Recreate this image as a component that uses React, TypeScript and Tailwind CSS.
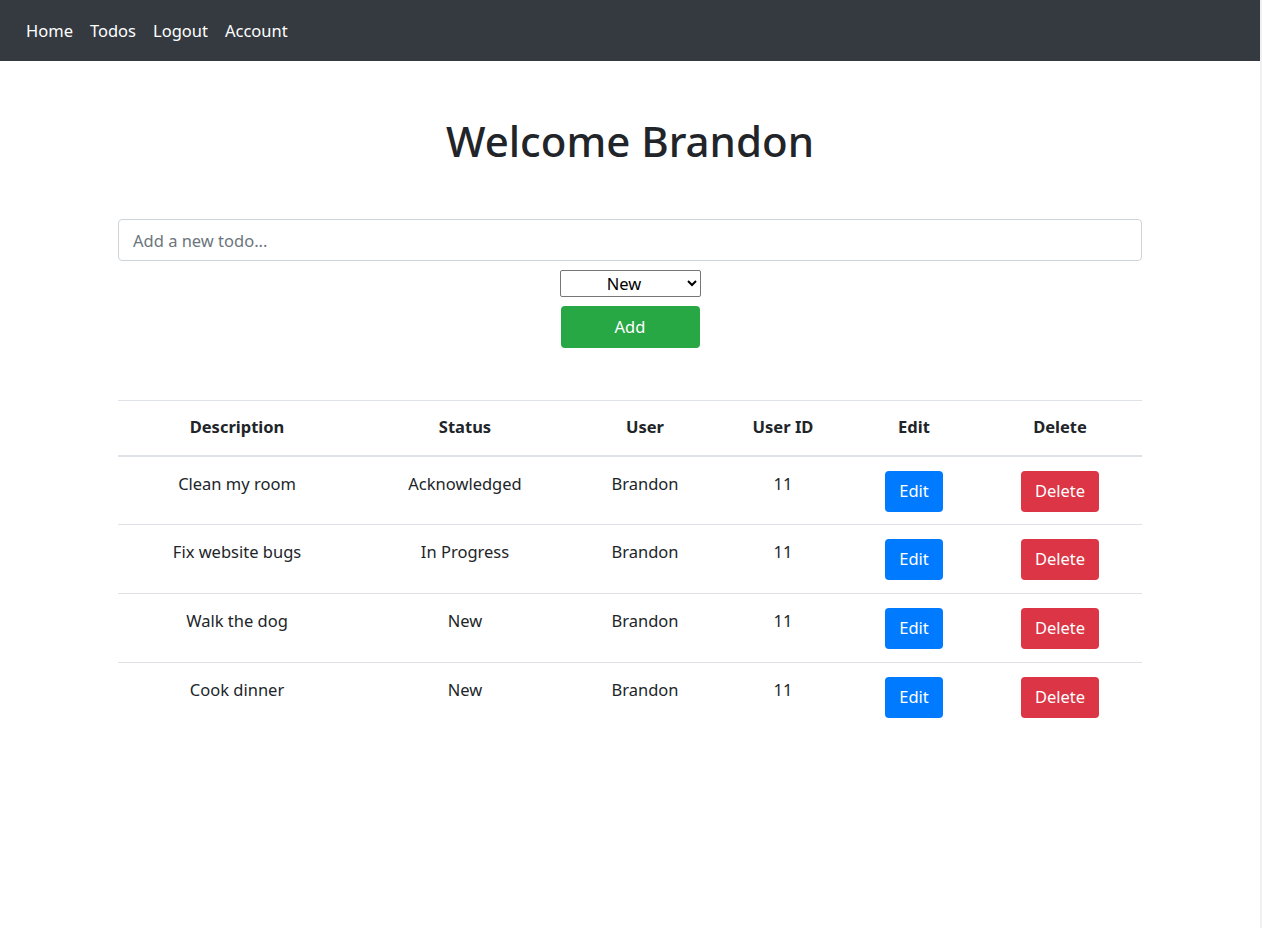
import React, { useState } from 'react'

type Todo = {
  id: number
  description: string
  status: string
  user: string
  userId: number
}

const todos: Todo[] = [
  { id: 1, description: 'Clean my room', status: 'Acknowledged', user: 'Brandon', userId: 11 },
  { id: 2, description: 'Fix website bugs', status: 'In Progress', user: 'Brandon', userId: 11 },
  { id: 3, description: 'Walk the dog', status: 'New', user: 'Brandon', userId: 11 },
  { id: 4, description: 'Cook dinner', status: 'New', user: 'Brandon', userId: 11 },
]

const font = { fontFamily: '"Noto Sans", "Open Sans", sans-serif' }

const NavBar: React.FC = () => (
  <nav className="h-[61px] bg-[#343a40] flex items-center pl-[17.5px]">
    {['Home', 'Todos', 'Logout', 'Account'].map((label) => (
      <a key={label} href="#" className="px-[8.5px] text-[16.5px] text-white leading-[27px]">
        {label}
      </a>
    ))}
  </nav>
)

export default function App() {
  const [status, setStatus] = useState('New')

  return (
    <div className="flex min-h-[928px] bg-white text-[#212529]" style={font}>
      <div className="flex-1 flex flex-col">
        <NavBar />

        <main className="w-[1024px] mx-auto flex flex-col items-center">
          {/* Heading */}
          <h1 className="mt-[51px] h-[58px] text-[42px] leading-[58px] font-medium">Welcome Brandon</h1>

          {/* New todo form */}
          <input
            type="text"
            placeholder="Add a new todo..."
            className="mt-[49px] w-full h-[42px] px-[14px] text-[16.5px] border border-[#ced4da] rounded-[4px] placeholder:text-[#6c757d] outline-none"
          />
          <select
            value={status}
            onChange={(e) => setStatus(e.target.value)}
            className="mt-[9px] w-[141px] h-[27px] text-[16.5px] text-black border border-[#767676] rounded-[2px] bg-white text-center [text-align-last:center]"
          >
            <option>New</option>
            <option>Acknowledged</option>
            <option>In Progress</option>
            <option>Done</option>
          </select>
          <button className="mt-[9px] w-[139px] h-[42px] rounded-[4px] bg-[#28a745] text-white text-[16.5px]">
            Add
          </button>

          {/* Todo table */}
          <table className="mt-[52px] w-full border-collapse text-[16.5px] text-center">
            <thead>
              <tr className="h-[55px] border-t border-[#dee2e6] border-b-2">
                <th className="w-[238px] font-bold">Description</th>
                <th className="w-[218px] font-bold">Status</th>
                <th className="w-[142px] font-bold">User</th>
                <th className="w-[134px] font-bold">User ID</th>
                <th className="w-[128px] font-bold">Edit</th>
                <th className="w-[164px] font-bold">Delete</th>
              </tr>
            </thead>
            <tbody>
              {todos.map((t, i) => (
                <tr
                  key={t.id}
                  className={i < todos.length - 1 ? 'h-[69px] border-b border-[#dee2e6] align-top' : 'h-[69px] align-top'}
                >
                  <td className="pt-[15px]">{t.description}</td>
                  <td className="pt-[15px]">{t.status}</td>
                  <td className="pt-[15px]">{t.user}</td>
                  <td className="pt-[15px]">{t.userId}</td>
                  <td className="pt-[14px]">
                    <button className="h-[41px] w-[58px] rounded-[4px] bg-[#007bff] text-white text-[16.5px]">Edit</button>
                  </td>
                  <td className="pt-[14px]">
                    <button className="h-[41px] w-[78px] rounded-[4px] bg-[#dc3545] text-white text-[16.5px]">Delete</button>
                  </td>
                </tr>
              ))}
            </tbody>
          </table>
        </main>
      </div>
      <div className="w-[2px] bg-[#f0f0f0]" />
    </div>
  )
}
